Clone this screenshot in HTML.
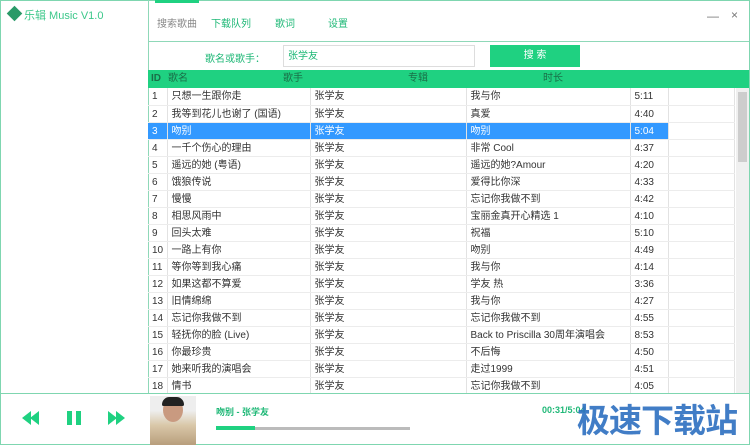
<!DOCTYPE html><html><head><meta charset="utf-8"><style>
*{margin:0;padding:0;box-sizing:border-box}
body{width:750px;height:445px;overflow:hidden;background:#fff;font-family:"Liberation Sans","Noto Sans CJK SC",sans-serif;font-size:10px;color:#333;position:relative}
.a{position:absolute}
table{border-collapse:collapse;position:absolute;left:148px;top:88px;width:587px;table-layout:fixed}
td{height:17px;border-right:1px solid #e2e2e2;border-bottom:1px solid #ececec;padding:0 0 0 4px;font-size:10px;white-space:nowrap;overflow:hidden;vertical-align:top}
td div{height:16px;padding-top:3px;line-height:12px}
tr.s td{background:#3399ff;color:#fff}
</style></head><body>
<div class="a" style="left:0;top:0;width:750px;height:445px;border:1px solid #7fd6b0"></div>
<div class="a" style="left:148px;top:0;width:1px;height:394px;background:#8fd8b8"></div>
<div class="a" style="left:9px;top:8px;width:11px;height:11px;background:#2a9a68;transform:rotate(45deg)"></div>
<div class="a" style="left:24px;top:7px;color:#3cc88a;font-size:11px">乐辑 Music V1.0</div>
<div class="a" style="left:155px;top:0;width:44px;height:3px;background:#1fd181"></div>
<div class="a" style="left:157px;top:15px;color:#888">搜索歌曲</div>
<div class="a" style="left:211px;top:15px;color:#1fb877">下载队列</div>
<div class="a" style="left:275px;top:15px;color:#1fb877">歌词</div>
<div class="a" style="left:328px;top:15px;color:#1fb877">设置</div>
<div class="a" style="left:707px;top:9px;color:#777;font-size:12px">—</div>
<div class="a" style="left:731px;top:8px;color:#777;font-size:12px">×</div>
<div class="a" style="left:149px;top:41px;width:600px;height:1px;background:#8fd8b8"></div>
<div class="a" style="left:205px;top:50px;color:#1fb877">歌名或歌手：</div>
<div class="a" style="left:283px;top:45px;width:192px;height:22px;border:1px solid #ddd;padding:5px 4px 0;line-height:12px;color:#1fb877">张学友</div>
<div class="a" style="left:490px;top:45px;width:90px;height:22px;background:#1fd181;color:#fff;text-align:center;line-height:22px">搜 索</div>
<div class="a" style="left:148px;top:70px;width:601px;height:18px;background:#1fd181;color:#1a6f48;font-size:10px;line-height:18px">
<span class="a" style="left:3px;font-weight:bold">ID</span><span class="a" style="left:20px">歌名</span><span class="a" style="left:135px">歌手</span><span class="a" style="left:260px">专辑</span><span class="a" style="left:395px">时长</span></div>
<table>
<colgroup><col style="width:19px"><col style="width:143px"><col style="width:156px"><col style="width:164px"><col style="width:38px"><col></colgroup>
<tr><td><div>1</div></td><td><div>只想一生跟你走</div></td><td><div>张学友</div></td><td><div>我与你</div></td><td><div>5:11</div></td><td></td></tr>
<tr><td><div>2</div></td><td><div>我等到花儿也谢了 (国语)</div></td><td><div>张学友</div></td><td><div>真爱</div></td><td><div>4:40</div></td><td></td></tr>
<tr class="s"><td><div>3</div></td><td><div>吻别</div></td><td><div>张学友</div></td><td><div>吻别</div></td><td><div>5:04</div></td><td style="background:#fff"></td></tr>
<tr><td><div>4</div></td><td><div>一千个伤心的理由</div></td><td><div>张学友</div></td><td><div>非常 Cool</div></td><td><div>4:37</div></td><td></td></tr>
<tr><td><div>5</div></td><td><div>遥远的她 (粤语)</div></td><td><div>张学友</div></td><td><div>遥远的她?Amour</div></td><td><div>4:20</div></td><td></td></tr>
<tr><td><div>6</div></td><td><div>饿狼传说</div></td><td><div>张学友</div></td><td><div>爱得比你深</div></td><td><div>4:33</div></td><td></td></tr>
<tr><td><div>7</div></td><td><div>慢慢</div></td><td><div>张学友</div></td><td><div>忘记你我做不到</div></td><td><div>4:42</div></td><td></td></tr>
<tr><td><div>8</div></td><td><div>相思风雨中</div></td><td><div>张学友</div></td><td><div>宝丽金真开心精选 1</div></td><td><div>4:10</div></td><td></td></tr>
<tr><td><div>9</div></td><td><div>回头太难</div></td><td><div>张学友</div></td><td><div>祝福</div></td><td><div>5:10</div></td><td></td></tr>
<tr><td><div>10</div></td><td><div>一路上有你</div></td><td><div>张学友</div></td><td><div>吻别</div></td><td><div>4:49</div></td><td></td></tr>
<tr><td><div>11</div></td><td><div>等你等到我心痛</div></td><td><div>张学友</div></td><td><div>我与你</div></td><td><div>4:14</div></td><td></td></tr>
<tr><td><div>12</div></td><td><div>如果这都不算爱</div></td><td><div>张学友</div></td><td><div>学友 热</div></td><td><div>3:36</div></td><td></td></tr>
<tr><td><div>13</div></td><td><div>旧情绵绵</div></td><td><div>张学友</div></td><td><div>我与你</div></td><td><div>4:27</div></td><td></td></tr>
<tr><td><div>14</div></td><td><div>忘记你我做不到</div></td><td><div>张学友</div></td><td><div>忘记你我做不到</div></td><td><div>4:55</div></td><td></td></tr>
<tr><td><div>15</div></td><td><div>轻抚你的脸 (Live)</div></td><td><div>张学友</div></td><td><div>Back to Priscilla 30周年演唱会</div></td><td><div>8:53</div></td><td></td></tr>
<tr><td><div>16</div></td><td><div>你最珍贵</div></td><td><div>张学友</div></td><td><div>不后悔</div></td><td><div>4:50</div></td><td></td></tr>
<tr><td><div>17</div></td><td><div>她来听我的演唱会</div></td><td><div>张学友</div></td><td><div>走过1999</div></td><td><div>4:51</div></td><td></td></tr>
<tr><td><div>18</div></td><td><div>情书</div></td><td><div>张学友</div></td><td><div>忘记你我做不到</div></td><td><div>4:05</div></td><td></td></tr>
</table>
<div class="a" style="left:736px;top:88px;width:13px;height:306px;background:#f0f0f0"></div>
<div class="a" style="left:738px;top:92px;width:9px;height:70px;background:#cdcdcd"></div>
<div class="a" style="left:0;top:393px;width:750px;height:52px;background:#fff;border:1px solid #7fd6b0"></div>
<svg class="a" style="left:22px;top:410px" width="110" height="16"><g fill="#1fd181"><polygon points="0,8 9,1 9,15"/><polygon points="8,8 17,1 17,15"/><rect x="45" y="1" width="5" height="14"/><rect x="54" y="1" width="5" height="14"/><polygon points="86,1 95,8 86,15"/><polygon points="94,1 103,8 94,15"/></g></svg>
<div class="a" style="left:150px;top:396px;width:46px;height:49px;background:linear-gradient(#eee 0,#eee 30%,#d9c7a8 60%,#b89e7c 100%)"></div>
<div class="a" style="left:163px;top:398px;width:20px;height:24px;border-radius:50%;background:#c99a80"></div>
<div class="a" style="left:162px;top:397px;width:22px;height:9px;border-radius:10px 10px 2px 2px;background:#222"></div>
<div class="a" style="left:216px;top:405px;color:#1fb877;font-size:9px;font-weight:bold">吻别 - 张学友</div>
<div class="a" style="left:542px;top:405px;color:#1fb877;font-size:9px;font-weight:bold">00:31/5:04</div>
<div class="a" style="left:216px;top:427px;width:194px;height:3px;background:#bbb"></div>
<div class="a" style="left:216px;top:426px;width:39px;height:4px;background:#1fd181"></div>
<div class="a" style="left:577px;top:394px;color:#2d6fc0;font-size:33px;font-weight:bold;letter-spacing:-1px;opacity:.9">极速下载站</div>
</body></html>
